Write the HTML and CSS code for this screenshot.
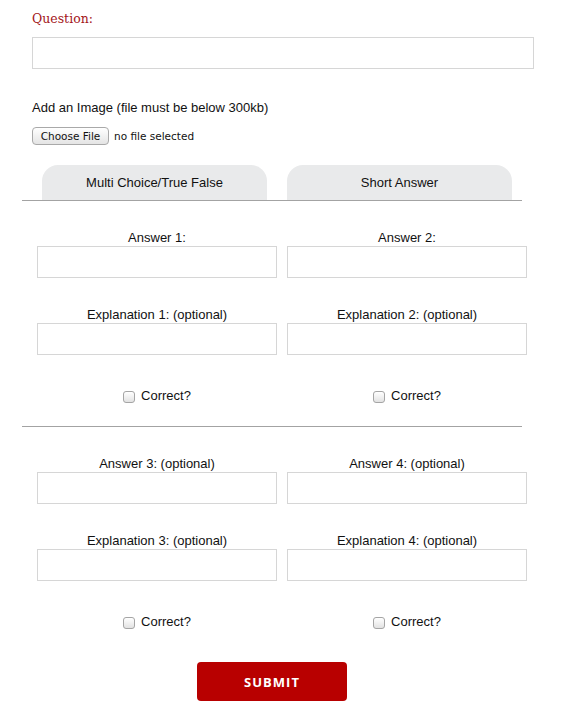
FILE: index.html
```html
<!DOCTYPE html>
<html>
<head>
<meta charset="utf-8">
<title>Question</title>
<link rel="stylesheet" href="styles.css">
</head>
<body>
<div class="page">
  <label class="q-label">Question:</label>
  <input class="q-input" type="text">
  <p class="img-label">Add an Image (file must be below 300kb)</p>
  <div class="file-row">
    <button class="file-btn" type="button">Choose File</button>
    <span class="file-status">no file selected</span>
  </div>
  <div class="tabs">
    <div class="tab">Multi Choice/True False</div>
    <div class="tab">Short Answer</div>
  </div>
  <section class="answers">
    <div class="grid">
      <div class="col">
        <label class="f-label">Answer 1:</label>
        <input class="f-input" type="text">
        <label class="f-label">Explanation 1: (optional)</label>
        <input class="f-input" type="text">
        <label class="check-row"><input class="check" type="checkbox"><span>Correct?</span></label>
      </div>
      <div class="col">
        <label class="f-label">Answer 2:</label>
        <input class="f-input" type="text">
        <label class="f-label">Explanation 2: (optional)</label>
        <input class="f-input" type="text">
        <label class="check-row"><input class="check" type="checkbox"><span>Correct?</span></label>
      </div>
    </div>
  </section>
  <section class="answers answers-last">
    <div class="grid">
      <div class="col">
        <label class="f-label">Answer 3: (optional)</label>
        <input class="f-input" type="text">
        <label class="f-label">Explanation 3: (optional)</label>
        <input class="f-input" type="text">
        <label class="check-row"><input class="check" type="checkbox"><span>Correct?</span></label>
      </div>
      <div class="col">
        <label class="f-label">Answer 4: (optional)</label>
        <input class="f-input" type="text">
        <label class="f-label">Explanation 4: (optional)</label>
        <input class="f-input" type="text">
        <label class="check-row"><input class="check" type="checkbox"><span>Correct?</span></label>
      </div>
    </div>
  </section>
  <div class="submit-row">
    <button class="submit" type="button">SUBMIT</button>
  </div>
</div>
</body>
</html>
```
FILE: styles.css
```css
html, body {
  margin: 0;
  padding: 0;
  background: #ffffff;
}
body {
  font-family: "Liberation Sans", Arial, sans-serif;
  font-size: 13px;
  color: #111111;
}
.page {
  width: 500px;
  margin-left: 22px;
  padding-top: 10px;
}
.q-label {
  display: block;
  margin-left: 10px;
  font-family: "DejaVu Serif", serif;
  font-size: 12.5px;
  line-height: 18px;
  color: #a3161a;
}
.q-input {
  display: block;
  margin: 9px 0 0 10px;
  width: 502px;
  height: 32px;
  box-sizing: border-box;
  border: 1px solid #d6d6d6;
  padding: 0 6px;
  outline: none;
}
.img-label {
  margin: 31px 0 0 10px;
  font-size: 13px;
  line-height: 16px;
}
.file-row {
  display: flex;
  align-items: center;
  gap: 5px;
  margin: 11px 0 0 10px;
  height: 18px;
}
.file-btn {
  height: 18px;
  width: 77px;
  padding: 0;
  box-sizing: border-box;
  border: 1px solid #a9a9a9;
  border-radius: 4px;
  background: linear-gradient(#ffffff, #e4e4e4);
  font-family: "DejaVu Sans", sans-serif;
  font-size: 10.5px;
  color: #111111;
}
.file-status {
  font-family: "DejaVu Sans", sans-serif;
  font-size: 10.5px;
  color: #111111;
}
.tabs {
  display: flex;
  gap: 20px;
  margin-top: 20px;
  padding-left: 20px;
}
.tab {
  width: 225px;
  height: 35px;
  line-height: 35px;
  text-align: center;
  background: #e9eaeb;
  border-radius: 16px 16px 0 0;
  font-size: 13px;
}
.answers {
  border-top: 1px solid #a3a3a3;
  padding: 29px 0 23px 15px;
}
.answers-last {
  padding-bottom: 0;
}
.grid {
  display: grid;
  grid-template-columns: 240px 240px;
  column-gap: 10px;
  width: 490px;
}
.col {
  display: flex;
  flex-direction: column;
}
.f-label {
  display: block;
  text-align: center;
  font-size: 13px;
  line-height: 16px;
  margin-bottom: 0;
}
.f-input {
  display: block;
  width: 240px;
  height: 32px;
  box-sizing: border-box;
  border: 1px solid #d6d6d6;
  margin: 0 0 29px 0;
  padding: 0 6px;
  outline: none;
}
.check-row {
  display: flex;
  justify-content: center;
  align-items: center;
  gap: 6px;
  margin-top: 4px;
  line-height: 15px;
  font-size: 13px;
}
.check {
  appearance: none;
  -webkit-appearance: none;
  width: 12px;
  height: 12px;
  margin: 2px 0 0 0;
  box-sizing: border-box;
  border: 1px solid #a5a5a5;
  border-radius: 3px;
  background: linear-gradient(#ffffff, #e2e2e2);
}
.submit-row {
  display: flex;
  justify-content: center;
  margin-top: 33px;
}
.submit {
  width: 150px;
  height: 39px;
  border: none;
  border-radius: 4px;
  background: #b80000;
  color: #ffffff;
  font-family: "Open Sans", sans-serif;
  font-weight: 700;
  font-size: 13px;
  letter-spacing: 1px;
}
```
